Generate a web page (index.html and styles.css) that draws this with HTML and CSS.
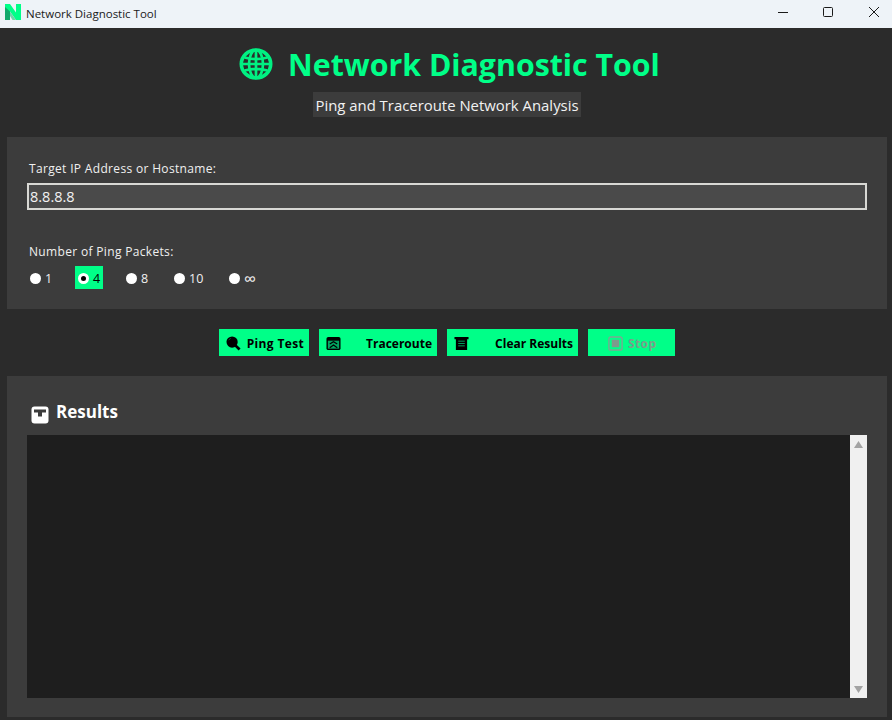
FILE: index.html
```html
<!DOCTYPE html>
<html lang="en">
<head>
<meta charset="utf-8">
<title>Network Diagnostic Tool</title>
<link rel="stylesheet" href="styles.css">
</head>
<body>
<div class="window">
  <header class="titlebar">
    <svg class="app-icon" viewBox="0 0 16 16"><path d="M0 0h5l6 8.500V0h5v16h-5L5 7.500V16H0z" fill="#00ff88"/><path d="M0 3l5 4.500V16H0z" fill="#12a86c"/><path d="M5 7.500l6 8.500H7.500L5 12z" fill="#6fd3a8"/></svg>
    <span class="app-name">Network Diagnostic Tool</span>
    <div class="controls">
      <svg class="ctl" viewBox="0 0 46 28"><path d="M24 12.500h10" stroke="#1a1a1a" fill="none"/></svg>
      <svg class="ctl" viewBox="0 0 46 28"><rect x="23.500" y="7.500" width="9" height="9" rx="1" stroke="#1a1a1a" fill="none"/></svg>
      <svg class="ctl" viewBox="0 0 46 28"><path d="M23 7l10 10M33 7l-10 10" stroke="#1a1a1a" fill="none"/></svg>
    </div>
  </header>
  <main class="content">
    <div class="heading">
      <h1 class="title">
        <svg class="globe" viewBox="0 0 34 32">
          <ellipse cx="17" cy="16" rx="14.700" ry="14" fill="#2b2b2b" stroke="#00f082" stroke-width="3.600"/>
          <g fill="none" stroke="#00f082" stroke-width="2.700">
            <ellipse cx="17" cy="16" rx="7" ry="14"/>
            <path d="M17 2v28M3 16h28M5.500 9.500c7 2 16 2 23 0M5.500 22.500c7-2 16-2 23 0"/>
          </g>
        </svg>
        <span>Network Diagnostic Tool</span>
      </h1>
      <p class="subtitle">Ping and Traceroute Network Analysis</p>
    </div>

    <section class="panel form">
      <label class="label target-label">Target IP Address or Hostname:</label>
      <div class="input">8.8.8.8</div>
      <div class="label packets-label">Number of Ping Packets:</div>
      <div class="radios">
        <div class="radio r1"><i class="dot"></i>1</div>
        <div class="radio r4 on"><i class="dot"></i>4</div>
        <div class="radio r8"><i class="dot"></i>8</div>
        <div class="radio r10"><i class="dot"></i>10</div>
        <div class="radio rinf"><i class="dot"></i><span class="inf">∞</span></div>
      </div>
    </section>

    <div class="actions">
      <button class="btn b-ping">
        <svg class="bi" viewBox="0 0 16 16"><circle cx="6.500" cy="6.500" r="6" fill="#000"/><path d="M10 10l4.500 4.500" stroke="#000" stroke-width="3"/><path d="M3 4.500a4 4 0 0 1 2-2" stroke="#0a5c38" fill="none"/></svg>
        <span>Ping Test</span>
      </button>
      <button class="btn b-trace">
        <svg class="bi" viewBox="0 0 16 16"><rect x="0.500" y="1" width="15" height="14" rx="2" fill="#000"/><rect x="2" y="5" width="12" height="8.500" fill="#00a862"/><path d="M4 8.500l4-2.500 4 2.500M4 12.500l4-3 4 3" stroke="#000" stroke-width="1.300" fill="none"/></svg>
        <span>Traceroute</span>
      </button>
      <button class="btn b-clear">
        <svg class="bi" viewBox="0 0 16 16"><path d="M0.500 1h15v2.500h-1.500v11.500h-12V3.500H0.500z" fill="#000"/><path d="M4.500 5.500h7M4.500 8h7M4.500 10.500h7" stroke="#00a862" stroke-width="1"/></svg>
        <span>Clear Results</span>
      </button>
      <button class="btn b-stop" disabled>
        <svg class="bi" viewBox="0 0 16 16"><rect x="1" y="1" width="14" height="14" rx="2" fill="none" stroke="#7fa592" stroke-width="1.500"/><rect x="4" y="4" width="8" height="8" fill="#7f9a8c"/></svg>
        <span>Stop</span>
      </button>
    </div>

    <section class="panel results">
      <h2 class="results-title">
        <svg class="clip" viewBox="0 0 18 18"><rect x="0.500" y="0.500" width="17" height="17" rx="3" fill="#fff"/><path d="M3 3.500h12v3h-4v4H7v-4H3z" fill="#3c3c3c"/></svg>
        <span>Results</span>
      </h2>
      <div class="output">
        <div class="log"></div>
        <div class="scrollbar">
          <svg class="arrow" viewBox="0 0 9 7"><path d="M4.500 0L9 7H0z" fill="#a3a3a3"/></svg>
          <svg class="arrow" viewBox="0 0 9 7"><path d="M0 0h9L4.500 7z" fill="#a3a3a3"/></svg>
        </div>
      </div>
    </section>
  </main>
</div>
</body>
</html>
```
FILE: styles.css
```css
* { box-sizing: border-box; }
html, body { margin: 0; padding: 0; height: 100%; }
body { font-family: "Open Sans", "Noto Sans", "Liberation Sans", sans-serif; background: #2b2b2b; overflow: hidden; }
.window { width: 892px; height: 720px; display: flex; flex-direction: column; }

.titlebar { height: 28px; flex: none; background: #eef3f8; display: flex; align-items: center; padding-left: 5px; }
.app-icon { width: 16px; height: 16px; margin: 0 5px 4px 0; }
.app-name { font-size: 11.500px; color: #1a1a1a; margin-bottom: 2px; }
.controls { margin-left: auto; display: flex; }
.ctl { width: 46px; height: 28px; display: block; }

.content { flex: 1; display: flex; flex-direction: column; padding: 0 5px 3px 7px; min-height: 0; }
.heading { height: 109px; flex: none; display: flex; flex-direction: column; align-items: center; }
.title { margin: 18px 0 0; padding-left: 5px; display: flex; align-items: center; gap: 15px; height: 38px; color: #00ff88; font-size: 30.300px; font-weight: 700; line-height: 38px; white-space: nowrap; }
.globe { width: 34px; height: 32px; flex: none; position: relative; top: -1px; }
.subtitle { margin: 8px 0 0; background: #3c3c3c; color: #f2f2f2; font-size: 14.900px; line-height: 24px; height: 25px; padding: 1px 2.500px 0; white-space: nowrap; }

.panel { background: #3c3c3c; flex: none; }
.form { height: 172px; padding: 23px 20px 0 20px; display: flex; flex-direction: column; }
.label { color: #f0f0f0; font-size: 12px; line-height: 18px; display: block; letter-spacing: .33px; }
.input { margin-top: 5px; height: 27px; border: 2px solid #d8d8d4; background: #4a4a4a; color: #f2f2f2; font-size: 14.500px; line-height: 23px; padding-left: 1px; }
.packets-label { margin-top: 33px; margin-left: 2px; }
.target-label { margin-left: 2px; }
.radios { display: flex; margin-top: 5px; height: 23px; }
.radio { height: 23px; color: #f0f0f0; font-size: 12.500px; line-height: 23px; display: flex; align-items: center; gap: 4px; padding: 1px 0 0 2px; }
.dot { width: 11px; height: 11px; border-radius: 50%; background: #fff; display: block; }
.inf { font-size: 17px; }
.r1 { width: 47px; margin-left: 1px; }
.r4 { width: 28px; background: #00ff88; color: #000; padding-left: 3px; }
.r4 .dot { background: #000; border: 3px solid #fff; }
.r8 { width: 48px; margin-left: 21px; }
.r10 { width: 55px; }
.rinf { width: 40px; }

.actions { height: 67px; flex: none; display: flex; align-items: center; justify-content: flex-start; gap: 10px; padding-left: 212px; }
.btn { height: 27px; border: 0; background: #00ff88; color: #000; font-family: "Open Sans", "Noto Sans", sans-serif; font-size: 12px; font-weight: 700; display: flex; align-items: center; justify-content: space-between; padding: 1px 5px 0 7px; margin: 0; }
.bi { width: 15px; height: 15px; flex: none; }
.b-ping { width: 90px; letter-spacing: .35px; }
.b-trace { width: 118px; }
.b-clear { width: 131px; }
.b-stop { width: 87px; color: #7a9d8b; justify-content: flex-start; gap: 5px; padding-left: 20px; letter-spacing: .4px; }

.results { height: 341px; padding: 0 20px 19px 20px; display: flex; flex-direction: column; }
.results-title { margin: 0; height: 59px; flex: none; display: flex; align-items: center; gap: 7px; color: #fff; font-size: 17px; font-weight: 700; padding: 15px 0 4px 4px; }
.clip { width: 18px; height: 18px; flex: none; position: relative; top: 4px; }
.output { flex: 1; display: flex; min-height: 0; background: #1e1e1e; }
.log { flex: 1; }
.scrollbar { width: 17px; background: #f0f0f0; display: flex; flex-direction: column; justify-content: space-between; align-items: center; padding: 6px 0 5px; }
.arrow { width: 9px; height: 7px; display: block; }
```
